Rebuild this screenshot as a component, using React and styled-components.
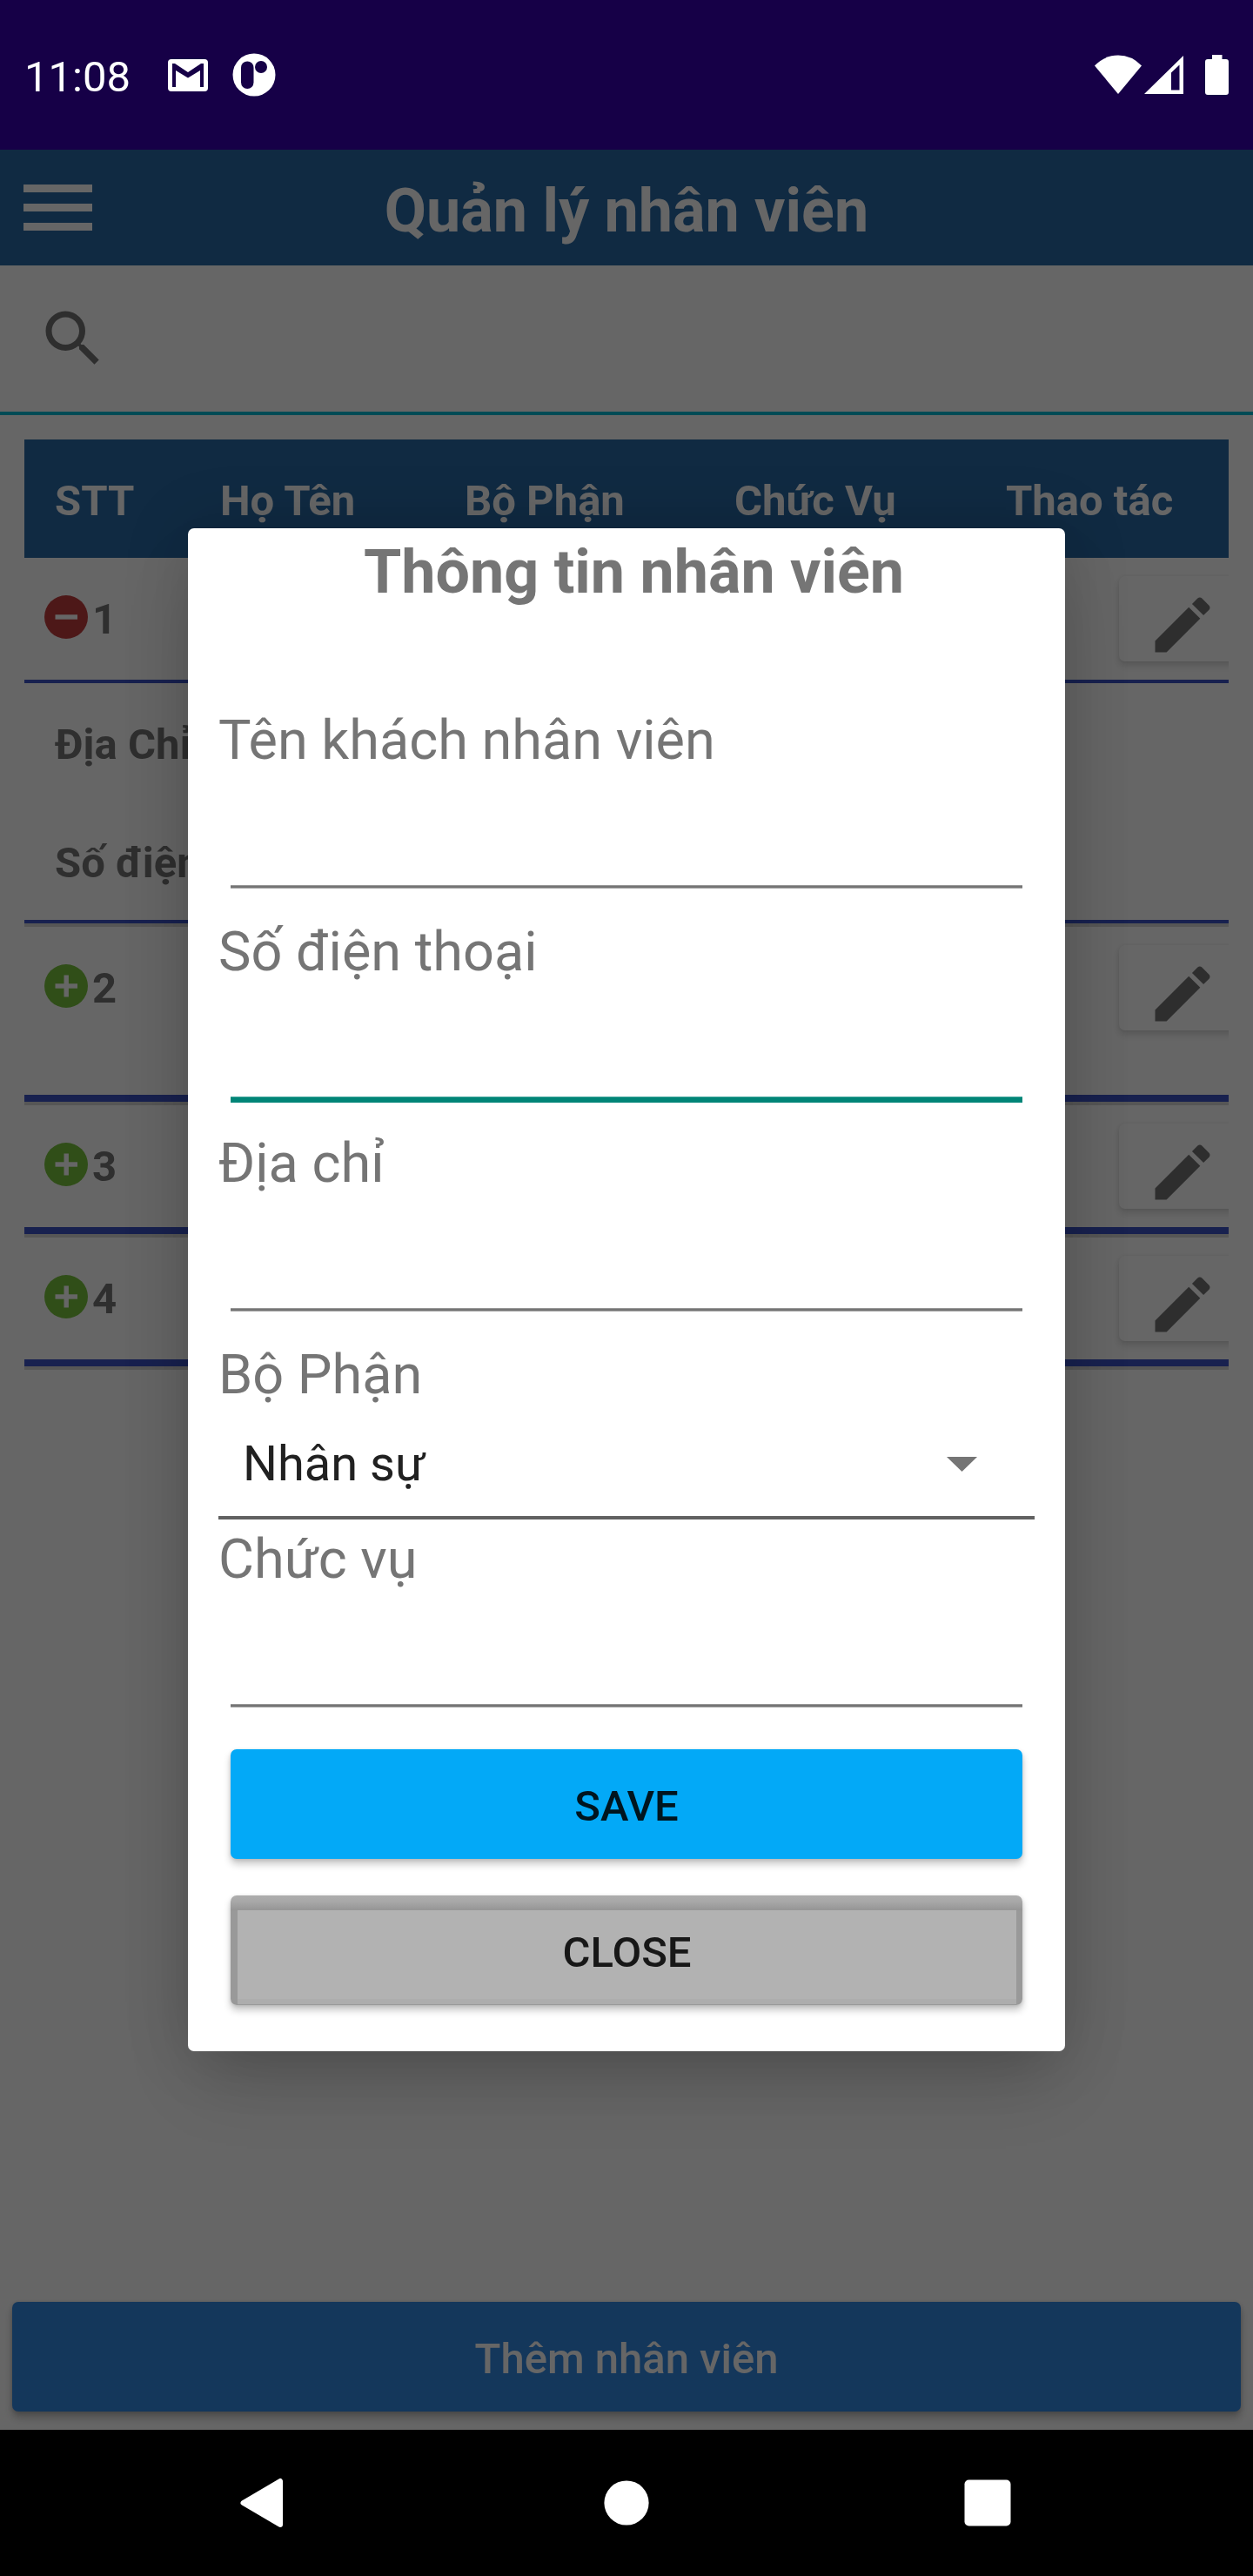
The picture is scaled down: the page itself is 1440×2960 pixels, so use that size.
import React from "react";
import styled, { createGlobalStyle, css } from "styled-components";

const GlobalStyle = createGlobalStyle`
  * { box-sizing: border-box; }
  html, body { margin: 0; padding: 0; background: #000; }
  body { font-family: Roboto, "Noto Sans", sans-serif; }
  button, input { font-family: inherit; border: 0; outline: 0; }
  svg { display: block; flex: none; }
`;

const Screen = styled.div`
  width: 1440px;
  height: 2960px;
  display: flex;
  flex-direction: column;
  overflow: hidden;
`;

/* System status bar */
const StatusBar = styled.header`
  height: 172px;
  flex: none;
  display: flex;
  align-items: center;
  justify-content: space-between;
  padding: 0 28px;
  background: #160047;
  color: #fff;
`;

const StatusGroup = styled.div`
  display: flex;
  align-items: center;
`;

const Clock = styled.span`
  width: 165px;
  padding-top: 5px;
  font-size: 49px;
  line-height: 60px;
`;

/* Application area */
const AppArea = styled.main`
  position: relative;
  height: 2620px;
  flex: none;
  display: flex;
  flex-direction: column;
  background: #fff;
`;

const TitleBar = styled.div`
  height: 133px;
  flex: none;
  display: grid;
  grid-template-columns: 106px 1fr 106px;
  align-items: center;
  background: #2869a6;
`;

const Menu = styled.div`
  display: flex;
  flex-direction: column;
  gap: 13px;
  padding-left: 27px;
`;

const MenuLine = styled.span`
  height: 9px;
  background: #fff;
`;

const PageTitle = styled.h1`
  margin: 0;
  padding-top: 7px;
  font-size: 70px;
  line-height: 84px;
  font-weight: 700;
  color: #fff;
  text-align: center;
`;

const SearchRow = styled.div`
  height: 172px;
  flex: none;
  padding: 42px 42px 0;
  border-bottom: 4px solid #00bcd4;
`;

const Table = styled.section`
  margin: 28px 28px 0;
  flex: 1;
`;

const TableHead = styled.div`
  height: 136px;
  display: grid;
  grid-template-columns: 190px 281px 310px 312px auto;
  align-items: center;
  padding: 4px 0 0 35px;
  background: #2869a6;
  color: #fff;
  font-size: 49px;
  font-weight: 700;
  white-space: nowrap;
`;

const Row = styled.div`
  height: ${(p) => p.$height}px;
  overflow: hidden;
  display: flex;
  align-items: flex-start;
  padding-left: 23px;
`;

const RowIndex = styled.div`
  height: 140px;
  width: 1235px;
  flex: none;
  display: flex;
  align-items: center;
  gap: 5px;
  padding-bottom: 4px;
  font-size: 49px;
  font-weight: 700;
  color: #757575;

  span { padding-top: 4px; }
`;

const EditButton = styled.button`
  width: 146px;
  height: 98px;
  flex: none;
  margin-top: 21px;
  padding: 14px 0 0 31px;
  border-radius: 7px;
  background: #fff;
  color: #747474;
  box-shadow: 0 5px 8px rgba(0, 0, 0, 0.15), 0 0 4px rgba(0, 0, 0, 0.06);
`;

const Rule = styled.div`
  height: ${(p) => p.$size}px;
  background: #3d53c5;
`;

const RuleShade = styled.div`
  height: 4px;
  background: #d6d6d6;
`;

const DetailLine = styled.div`
  height: 136px;
  display: flex;
  align-items: center;
  padding: 4px 0 0 35px;
  font-size: 49px;
  font-weight: 700;
  color: #757575;
`;

const buttonBase = css`
  height: 126px;
  flex: none;
  display: flex;
  align-items: center;
  justify-content: center;
  border-radius: 7px;
  padding: 4px 0 0;
  font-size: 49px;
  font-weight: 500;
`;

const AddButton = styled.button`
  ${buttonBase}
  margin: 0 14px 21px;
  background: #3489e3;
  color: #fff;
  box-shadow: 0 7px 10px rgba(0, 0, 0, 0.24), 0 1px 5px rgba(0, 0, 0, 0.14);
`;

/* Modal layer */
const Scrim = styled.div`
  position: absolute;
  inset: 0;
  display: flex;
  align-items: center;
  justify-content: center;
  background: rgba(0, 0, 0, 0.6);
`;

const Dialog = styled.form`
  width: 1008px;
  height: 1750px;
  display: flex;
  flex-direction: column;
  border-radius: 7px;
  background: #fff;
  box-shadow: 0 44px 80px -16px rgba(0, 0, 0, 0.18), 0 0 80px rgba(0, 0, 0, 0.14);
`;

const DialogTitle = styled.h2`
  margin: 0 0 101px;
  padding-left: 17px;
  font-size: 70px;
  line-height: 100px;
  font-weight: 700;
  color: #757575;
  text-align: center;
`;

const Field = styled.div`
  height: 243px;
  flex: none;
  padding: 0 35px;
  display: flex;
  flex-direction: column;
`;

const Label = styled.label`
  display: block;
  font-size: 63px;
  line-height: 85px;
  color: #757575;
`;

const TextInput = styled.input`
  height: 124px;
  margin: 0 14px;
  padding: 0 14px;
  font-size: 56px;
  background: transparent;
`;

const Underline = styled.div`
  margin: 0 14px;
  height: ${(p) => (p.$focused ? 7 : 4)}px;
  background: ${(p) =>
    p.$focused
      ? "linear-gradient(#3fa399 1px, #008577 1px)"
      : "linear-gradient(#979797 1px, #757575 1px, #757575 3px, #a0a0a0 3px)"};
`;

const SelectField = styled.div`
  padding: 0 35px;
  margin-bottom: 3px;
`;

const Select = styled.div`
  height: 124px;
  display: flex;
  align-items: center;
  justify-content: space-between;
  padding: 0 66px 0 28px;
  border-bottom: 4px solid #616161;
  font-size: 56px;
  color: #212121;
`;

const SaveButton = styled.button`
  ${buttonBase}
  margin: 18px 49px 42px;
  background: #03a9f7;
  color: #00151f;
  box-shadow: 0 6px 8px rgba(0, 0, 0, 0.22), 0 1px 4px rgba(0, 0, 0, 0.12);
`;

const CloseButton = styled.button`
  height: 126px;
  flex: none;
  display: flex;
  margin: 0 49px;
  padding: 17px 7px 1px 8px;
  border-radius: 7px;
  background: linear-gradient(#adadad 0, #a8a8a8 7px, #959595 17px, #999 17px);
  color: #171717;
  font-size: 49px;
  font-weight: 500;
  box-shadow: 0 6px 8px rgba(0, 0, 0, 0.22), 0 1px 4px rgba(0, 0, 0, 0.12);
`;

const CloseFace = styled.span`
  flex: 1;
  height: 108px;
  padding-bottom: 12px;
  display: flex;
  align-items: center;
  justify-content: center;
  background: linear-gradient(#b2b2b2 102px, #adadad 102px);
`;

/* System navigation bar */
const NavBar = styled.nav`
  height: 168px;
  flex: none;
  display: grid;
  grid-template-columns: 585px 270px 585px;
  align-items: center;
  background: #000;
`;

const NavSlot = styled.div`
  display: flex;
  justify-content: ${(p) => p.$align || "flex-start"};
  padding: ${(p) => p.$pad || 0};
`;

const MailIcon = () => (
  <svg width="46" height="37" viewBox="0 0 46 37">
    <path fill="#fff" fillRule="evenodd" d="M4 0H42Q46 0 46 4V33Q46 37 42 37H4Q0 37 0 33V4Q0 0 4 0ZM5 5V32H9V13L23 21.5L37 13V32H41V5H38L23 15L8 5Z" />
  </svg>
);

const CircleAppIcon = () => (
  <svg width="50" height="50" viewBox="0 0 50 50">
    <circle cx="25" cy="25" r="24.5" fill="#fff" />
    <rect x="10" y="9.5" width="14.5" height="31.5" rx="7.2" fill="#160047" />
    <circle cx="33" cy="16" r="7" fill="#160047" />
  </svg>
);

const WifiIcon = () => (
  <svg width="54" height="46" viewBox="0 0 54 46">
    <path fill="#fff" d="M0 12.5Q11.5 .5 27 .5T54 12.5L27 45Z" />
  </svg>
);

const SignalIcon = () => (
  <svg width="45" height="46" viewBox="0 0 45 46">
    <path fill="#fff" fillRule="evenodd" d="M45 1V45H0ZM40.500 11.500L31 20.500V40.500H40.500Z" />
  </svg>
);

const BatteryIcon = () => (
  <svg width="27" height="46" viewBox="0 0 27 46">
    <path fill="#fff" d="M8 0H19.500V5H24Q27 5 27 8V43Q27 46 24 46H3Q0 46 0 43V8Q0 5 3 5H8Z" />
  </svg>
);

const SearchIcon = () => (
  <svg width="84" height="84" viewBox="0 0 24 24" fill="#747474">
    <path d="M15.5 14h-.79l-.28-.27A6.47 6.47 0 0 0 16 9.5 6.5 6.5 0 1 0 9.500 16c1.610 0 3.090-.59 4.230-1.570l.27.28v.79l5 4.990L20.490 19l-4.990-5zm-6 0C7.010 14 5 11.990 5 9.500S7.010 5 9.500 5 14 7.010 14 9.500 11.990 14 9.500 14z" />
  </svg>
);

const PencilIcon = () => (
  <svg width="84" height="84" viewBox="0 0 24 24" fill="currentColor">
    <path d="M3 17.25V21h3.750L17.810 9.940l-3.750-3.750L3 17.250zM20.710 7.040c.39-.39.39-1.020 0-1.410l-2.340-2.340c-.39-.39-1.020-.39-1.410 0l-1.830 1.830 3.750 3.750 1.830-1.830z" />
  </svg>
);

const ToggleIcon = ({ open }) => (
  <svg width="50" height="50" viewBox="0 0 50 50">
    <circle cx="25" cy="25" r="25" fill={open ? "#c13e3e" : "#78c23e"} />
    <rect x="12.500" y="22.300" width="25.500" height="5.400" fill="#fff" />
    {!open && <rect x="22.500" y="12.500" width="5.400" height="25" fill="#fff" />}
  </svg>
);

const CaretIcon = () => (
  <svg width="35" height="17" viewBox="0 0 35 17">
    <path fill="#757575" d="M0 0H35L17.500 17Z" />
  </svg>
);

const columns = ["STT", "Họ Tên", "Bộ Phận", "Chức Vụ", "Thao tác"];

const rows = [
  { id: 1, height: 140, rule: 4, details: ["Địa Chỉ", "Số điện thoại"] },
  { id: 2, height: 193, rule: 8 },
  { id: 3, height: 140, rule: 8 },
  { id: 4, height: 140, rule: 8 },
];

function EmployeeRow({ row }) {
  return (
    <>
      <Row $height={row.height}>
        <RowIndex>
          <ToggleIcon open={!!row.details} />
          <span>{row.id}</span>
        </RowIndex>
        <EditButton type="button"><PencilIcon /></EditButton>
      </Row>
      <Rule $size={row.rule} />
      {row.details && (
        <>
          {row.details.map((d) => <DetailLine key={d}>{d}</DetailLine>)}
          <Rule $size={4} />
        </>
      )}
      <RuleShade />
    </>
  );
}

function TextField({ label, focused }) {
  return (
    <Field>
      <Label>{label}</Label>
      <TextInput aria-label={label} />
      <Underline $focused={focused} />
    </Field>
  );
}

export default function App() {
  return (
    <>
      <GlobalStyle />
      <Screen>
        <StatusBar>
          <StatusGroup>
            <Clock>11:08</Clock>
            <MailIcon />
            <NavSlot $pad="0 0 0 28px"><CircleAppIcon /></NavSlot>
          </StatusGroup>
          <StatusGroup>
            <WifiIcon />
            <NavSlot $pad="0 25px 0 3px"><SignalIcon /></NavSlot>
            <BatteryIcon />
          </StatusGroup>
        </StatusBar>

        <AppArea>
          <TitleBar>
            <Menu><MenuLine /><MenuLine /><MenuLine /></Menu>
            <PageTitle>Quản lý nhân viên</PageTitle>
          </TitleBar>
          <SearchRow><SearchIcon /></SearchRow>
          <Table>
            <TableHead>
              {columns.map((c) => <span key={c}>{c}</span>)}
            </TableHead>
            {rows.map((r) => <EmployeeRow key={r.id} row={r} />)}
          </Table>
          <AddButton type="button">Thêm nhân viên</AddButton>

          <Scrim>
            <Dialog>
              <DialogTitle>Thông tin nhân viên</DialogTitle>
              <TextField label="Tên khách nhân viên" />
              <TextField label="Số điện thoại" focused />
              <TextField label="Địa chỉ" />
              <SelectField>
                <Label>Bộ Phận</Label>
                <Select>
                  <span>Nhân sự</span>
                  <CaretIcon />
                </Select>
              </SelectField>
              <TextField label="Chức vụ" />
              <SaveButton type="button">SAVE</SaveButton>
              <CloseButton type="button"><CloseFace>CLOSE</CloseFace></CloseButton>
            </Dialog>
          </Scrim>
        </AppArea>

        <NavBar>
          <NavSlot $pad="0 0 0 276px">
            <svg width="50" height="58" viewBox="0 0 50 58">
              <path fill="#fff" stroke="#fff" strokeWidth="6" strokeLinejoin="round" d="M46 4V54L3.500 29Z" />
            </svg>
          </NavSlot>
          <NavSlot $align="center">
            <svg width="52" height="52" viewBox="0 0 52 52">
              <circle cx="26" cy="26" r="25.600" fill="#fff" />
            </svg>
          </NavSlot>
          <NavSlot $align="flex-end" $pad="0 278px 0 0">
            <svg width="54" height="54" viewBox="0 0 54 54">
              <rect x=".5" y=".5" width="53" height="53" rx="5" fill="#fff" />
            </svg>
          </NavSlot>
        </NavBar>
      </Screen>
    </>
  );
}
